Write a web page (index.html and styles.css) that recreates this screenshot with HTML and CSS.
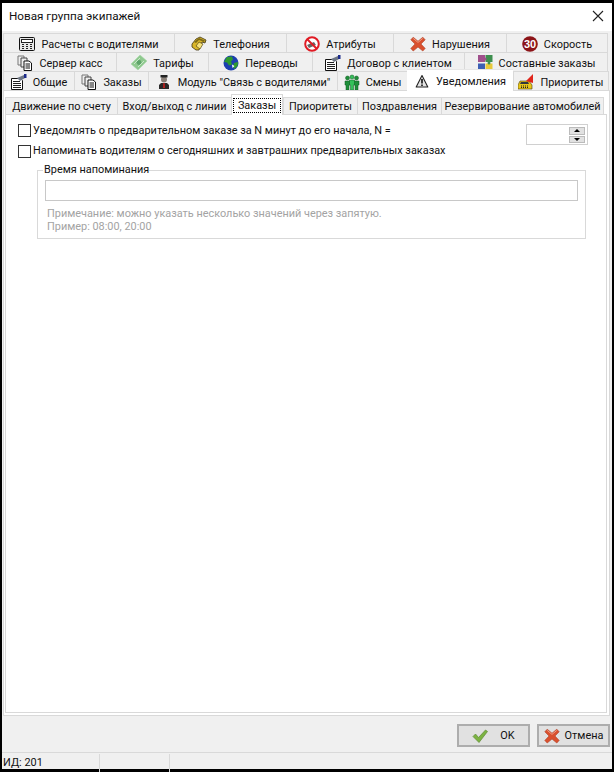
FILE: index.html
```html
<!DOCTYPE html>
<html lang="ru">
<head>
<meta charset="utf-8">
<title>Новая группа экипажей</title>
<link rel="stylesheet" href="styles.css">
</head>
<body>
<svg class="defs" width="0" height="0" aria-hidden="true">
  <defs>
    <symbol id="i-x" viewBox="0 0 16 16">
      <path d="M3.200 1.200 8 5.200l4.800-4 2.400 2.600L11 8l4.200 4.400-2.400 2.600L8 11l-4.800 4L.8 12.400 5 8 .8 3.800z" fill="#d9502e" stroke="#b0432a" stroke-width=".6"/>
      <path d="M3.200 2.400 8 6.400l4.800-4" fill="none" stroke="#ef9a80" stroke-width="1"/>
    </symbol>
    <symbol id="i-docflag" viewBox="0 0 16 16">
      <path d="M.5 4.500h9l2 2v9H.5z" fill="#fff" stroke="#111"/>
      <path d="M2 7.500h7M2 9.500h8M2 11.500h8M2 13.500h8" stroke="#222"/>
      <path d="M6 4 13 1l1 3-5 3z" fill="#6d7684"/>
      <rect x="13" y="0" width="2.500" height="4" fill="#1b2a8a"/>
    </symbol>
    <symbol id="i-docs" viewBox="0 0 16 16">
      <path d="M1 1h6v9H1z" fill="#eee" stroke="#777"/>
      <path d="M4 3h6v9H4z" fill="#eee" stroke="#444"/>
      <path d="M7 6h5l2.500 2v7.500H7z" fill="#fff" stroke="#111"/>
      <path d="M8.500 9h4.500M8.500 11h4.500M8.500 13h4.500" stroke="#111"/>
    </symbol>
  </defs>
</svg>
<div class="window">
  <header class="titlebar">
    <span class="title">Новая группа экипажей</span>
    <svg class="close" width="12" height="12" viewBox="0 0 12 12"><path d="M1 1l10 10M11 1 1 11" stroke="#222" stroke-width="1.100"/></svg>
  </header>
  <main class="body">
    <div class="tabrows">
      <div class="tabrow row1">
        <div class="tab">
          <svg class="icon" viewBox="0 0 16 16"><rect x=".5" y="1.500" width="15" height="13" rx="1" fill="#e8e8e8" stroke="#111"/><rect x="2.500" y="3.500" width="11" height="3" fill="#fff" stroke="#222"/><path d="M3 8.500h2M7 8.500h2M11 8.500h2M3 10.500h2M7 10.500h2M11 10.500h2M3 12.500h2M7 12.500h2M11 12.500h2" stroke="#222"/></svg>
          <span>Расчеты с водителями</span>
        </div>
        <div class="tab">
          <svg class="icon" viewBox="0 0 16 16"><path d="M1 8 5 3 9 1l6 3-1 3-3-1-3 8H5L1 11z" fill="#d9b62a" stroke="#3f3410" stroke-width=".8"/><path d="M5 10l3-4 4 2-3 5z" fill="#f7e37a" stroke="#5a4a12" stroke-width=".7"/><path d="M3 6 8 2l6 2.500-1 1.500L8 4 5 7z" fill="#7d6a14"/></svg>
          <span>Телефония</span>
        </div>
        <div class="tab">
          <svg class="icon" viewBox="0 0 16 16"><circle cx="8" cy="8" r="6.800" fill="#fff" stroke="#e01b24" stroke-width="2"/><path d="M3 9l7-3 2 3-7 3z" fill="#666"/><path d="M3.500 3.500l9 9" stroke="#e01b24" stroke-width="2"/></svg>
          <span>Атрибуты</span>
        </div>
        <div class="tab">
          <svg class="icon" viewBox="0 0 16 16"><use href="#i-x"/></svg>
          <span>Нарушения</span>
        </div>
        <div class="tab">
          <svg class="icon" viewBox="0 0 16 16"><circle cx="8" cy="8" r="7.800" fill="#8c1418"/><text x="8" y="12" class="badge-text">30</text></svg>
          <span>Скорость</span>
        </div>
      </div>
      <div class="tabrow row2">
        <div class="tab">
          <svg class="icon" viewBox="0 0 16 16"><use href="#i-docs"/></svg>
          <span>Сервер касс</span>
        </div>
        <div class="tab">
          <svg class="icon" viewBox="0 0 16 16"><path d="M0 9 9 0l7 6-9 9z" fill="#8fc98f" stroke="#a6d6a6" stroke-width=".5"/><circle cx="8" cy="7.500" r="2.400" fill="#5fa46a"/><path d="M3 9l6-6M7 12l6-6" stroke="#c9e8c9"/></svg>
          <span>Тарифы</span>
        </div>
        <div class="tab">
          <svg class="icon" viewBox="0 0 16 16"><circle cx="8" cy="8" r="7.500" fill="#1c3fb0"/><path d="M4 2 9 1.500l1 3-2 2 1 3-3 1-2-3-3-.5z" fill="#2e9a2e"/><path d="M11 8l4-1-.5 4-3 3-1.500-2z" fill="#2e9a2e"/><path d="M9 9.500l2.500 1.500-2 2z" fill="#fff"/></svg>
          <span>Переводы</span>
        </div>
        <div class="tab">
          <svg class="icon" viewBox="0 0 16 16"><use href="#i-docflag"/></svg>
          <span>Договор с клиентом</span>
        </div>
        <div class="tab">
          <svg class="icon" viewBox="0 0 16 16"><rect x="1" y="0" width="7" height="7" fill="#a0508c"/><rect x="8.500" y="0" width="7" height="7" fill="#3e8f4e"/><rect x="1" y="8.500" width="7" height="7" fill="#3c5fb4"/><rect x="8.500" y="8.500" width="7" height="7" fill="#e8c93a"/><circle cx="8" cy="4" r="1.500" fill="#a0508c"/><circle cx="12" cy="8" r="1.500" fill="#3e8f4e"/></svg>
          <span>Составные заказы</span>
        </div>
      </div>
      <div class="tabrow row3">
        <div class="tab">
          <svg class="icon" viewBox="0 0 16 16"><use href="#i-docflag"/></svg>
          <span>Общие</span>
        </div>
        <div class="tab">
          <svg class="icon" viewBox="0 0 16 16"><use href="#i-docs"/></svg>
          <span>Заказы</span>
        </div>
        <div class="tab">
          <svg class="icon" viewBox="0 0 16 16"><path d="M3 15v-4l2-2h6l2 2v4z" fill="#2a2a2a"/><path d="M7.300 9h1.400l.3 5H7z" fill="#c0201e"/><circle cx="8" cy="5.500" r="3" fill="#8a8078"/><rect x="4.500" y="1" width="7" height="2.500" fill="#222"/></svg>
          <span>Модуль "Связь с водителями"</span>
        </div>
        <div class="tab">
          <svg class="icon" viewBox="0 0 16 16"><g fill="#1f8f3a" stroke="#0f5a20" stroke-width=".5"><circle cx="3.500" cy="4" r="2"/><circle cx="12.500" cy="4" r="2"/><path d="M1 7h5v4H5v5H2v-5H1zM10 7h5v4h-1v5h-3v-5h-1z"/></g><g fill="#34c05a" stroke="#0f5a20" stroke-width=".5"><circle cx="8" cy="3" r="2"/><path d="M5.500 6h5v5h-1v5h-3v-5h-1z"/></g></svg>
          <span>Смены</span>
        </div>
        <div class="tab active">
          <svg class="icon" viewBox="0 0 16 16"><path d="M8 2.500 13.800 14H2.200z" fill="#e4e4e4" stroke="#222" stroke-width="1.100" stroke-linejoin="round"/><path d="M8 6v4.500M8 11.500v1.500" stroke="#111" stroke-width="1.600"/></svg>
          <span>Уведомления</span>
        </div>
        <div class="tab">
          <svg class="icon" viewBox="0 0 16 16"><path d="M0 11l2-4h9l3 4v4H0z" fill="#e8c518" stroke="#4a3d08" stroke-width=".6"/><path d="M3 8h7l1 2H2z" fill="#30363e"/><path d="M3 12h8M3 13.500h8" stroke="#222" stroke-dasharray="1 1"/><path d="M8 7 15 0v9z" fill="#e0261c"/></svg>
          <span>Приоритеты</span>
        </div>
      </div>
    </div>
    <section class="outerpanel">
      <div class="subtabs">
        <div class="subtab">Движение по счету</div>
        <div class="subtab">Вход/выход с линии</div>
        <div class="subtab active"><span class="focus">Заказы</span></div>
        <div class="subtab">Приоритеты</div>
        <div class="subtab">Поздравления</div>
        <div class="subtab">Резервирование автомобилей</div>
      </div>
      <div class="innerpanel">
        <div class="option first">
          <span class="check"></span>
          <span class="label">Уведомлять о предварительном заказе за N минут до его начала, N =</span>
          <div class="spin">
            <span class="spinbtn"><i class="up"></i></span>
            <span class="spinbtn"><i class="down"></i></span>
          </div>
        </div>
        <div class="option second">
          <span class="check"></span>
          <span class="label">Напоминать водителям о сегодняшних и завтрашних предварительных заказах</span>
        </div>
        <fieldset class="group">
          <legend>Время напоминания</legend>
          <div class="textbox"></div>
          <p class="hint">Примечание: можно указать несколько значений через запятую.<br>Пример: 08:00, 20:00</p>
        </fieldset>
      </div>
    </section>
    <div class="actions">
      <button class="btn ok" type="button">
        <svg class="icon" viewBox="0 0 16 16"><path d="M1 8.500 3.500 6l3 3.500L13.500 2 15.500 3.500 7 14.500z" fill="#7cb342" stroke="#5f8a35" stroke-width=".7"/></svg>
        <span>OK</span>
      </button>
      <button class="btn cancel" type="button">
        <svg class="icon" viewBox="0 0 16 16"><use href="#i-x"/></svg>
        <span>Отмена</span>
      </button>
    </div>
  </main>
  <footer class="statusbar">
    <div class="cell id">ИД: 201</div>
    <div class="cell mid"></div>
    <div class="cell"></div>
  </footer>
</div>
</body>
</html>
```
FILE: styles.css
```css
* { box-sizing: border-box; }
html, body { margin: 0; height: 100%; background: #000; }
body {
  padding: 3px 2px 3px 2px;
  font: 10.900px/16px Roboto, "Noto Sans", sans-serif;
  color: #111;
}
.defs { position: absolute; }
.window {
  height: 766px;
  display: flex;
  flex-direction: column;
  background: #f0f0f0;
}
.titlebar {
  height: 28px;
  flex: none;
  background: #fff;
  display: flex;
  align-items: center;
  justify-content: space-between;
  padding: 0 8px 2px 7px;
}
.title { font-size: 11.700px; }
.body {
  flex: 1;
  display: flex;
  flex-direction: column;
  padding: 2px 2px 0 1px;
}
.tabrows { display: flex; flex-direction: column; padding-right: 1px; }
.tabrow { display: grid; height: 19px; }
.row1 { grid-template-columns: 171px 112px 107px 113px 102px; padding-right: 1px; }
.row2 { grid-template-columns: 113px 92px 104px 152px 144px; padding-right: 1px; }
.row3 { grid-template-columns: 71px 74px 189px 70px 106px 96px; height: 20px; }
.tab {
  display: flex;
  align-items: center;
  justify-content: center;
  gap: 6px;
  padding-top: 1px;
  border: 1px solid #d9d9d9;
  border-bottom: 0;
  border-right: 0;
  white-space: nowrap;
}
.tab span { position: relative; top: 1px; }
.tab:last-child { border-right: 1px solid #d9d9d9; }
.tab.active {
  background: #fff;
  margin-top: -2px;
  position: relative;
  border: 0;
  border-top: 1px solid #e6e6e6;
}
.icon { width: 16px; height: 16px; flex: none; display: block; }
.badge-text {
  font: bold 11px "Liberation Sans", sans-serif;
  fill: #fff;
  text-anchor: middle;
}
.outerpanel {
  height: 626px;
  flex: none;
  background: #fff;
  border: 1px solid #d9d9d9;
  padding: 3px 2px 2px 1px;
  display: flex;
  flex-direction: column;
  margin-top: -1px;
}
.subtabs { display: grid; grid-template-columns: 112px 114px 52px 74px 84px 163px; height: 20px; flex: none; padding-top: 3px; }
.subtab {
  display: flex;
  align-items: center;
  justify-content: center;
  padding-top: 1px;
  background: #f0f0f0;
  border: 1px solid #d9d9d9;
  border-bottom: 0;
  border-right: 0;
  white-space: nowrap;
}
.subtab:last-child { border-right: 1px solid #d9d9d9; }
.subtab.active {
  background: #fff;
  margin-top: -3px;
  border: 1px solid #d9d9d9;
  border-bottom: 0;
  position: relative;
  padding: 1px;
}
.focus {
  flex: 1;
  text-align: center;
  border: 1px dotted #000;
  height: 15px;
  line-height: 13px;
}
.innerpanel {
  flex: 1;
  border: 1px solid #d9d9d9;
  padding: 9px 18px 0 12px;
  display: flex;
  flex-direction: column;
}
.option { display: flex; align-items: center; gap: 2px; }
.first { height: 21px; align-items: flex-start; }
.second { height: 14px; margin-top: -1px; }
.check {
  width: 13px;
  height: 13px;
  flex: none;
  background: #fff;
  border: 1px solid #333;
}
.label { white-space: nowrap; }
.first .label { line-height: 14px; }
.spin {
  margin-left: auto;
  width: 62px;
  height: 21px;
  border: 1px solid #d0d0d0;
  display: flex;
  flex-direction: column;
  align-items: flex-end;
  padding: 2px 2px 0 0;
  gap: 1px;
}
.spinbtn {
  width: 16px;
  height: 7.500px;
  background: #e1e1e1;
  border: 1px solid #bbb;
  display: flex;
  align-items: center;
  justify-content: center;
}
.spinbtn i { display: block; width: 0; height: 0; border: 3px solid transparent; }
.spinbtn .up { border-bottom: 3px solid #000; border-top: 0; }
.spinbtn .down { border-top: 3px solid #000; border-bottom: 0; }
.group {
  margin: 5px 2px 0 19px;
  padding: 0 7px;
  height: 76px;
  border: 1px solid #d9d9d9;
  min-width: 0;
}
legend { padding: 0 0 0 1px; margin-left: -2px; line-height: 14px; }
.textbox {
  height: 21px;
  margin-top: 3px;
  background: #fff;
  border: 1px solid #c8c8c8;
}
.hint {
  margin: 6px 0 0 2px;
  line-height: 13px;
  color: #a3a3a3;
}
.actions {
  flex: 1;
  display: flex;
  justify-content: flex-end;
  align-items: flex-start;
  gap: 7px;
  padding-top: 8px;
}
.btn {
  width: 73px;
  height: 23px;
  padding: 0;
  background: #e1e1e1;
  border: 2px solid #adadad;
  display: flex;
  align-items: center;
  justify-content: center;
  font: inherit;
  color: #111;
}
.ok { gap: 12px; }
.cancel { gap: 5px; }
.statusbar {
  height: 17px;
  flex: none;
  border-top: 1px solid #d9d9d9;
  display: grid;
  grid-template-columns: 98px 70px 1fr;
  line-height: 18px;
}
.cell { padding-left: 1px; border-right: 1px solid #d9d9d9; margin-top: 1px; }
.cell:last-child { border-right: 0; }
```
